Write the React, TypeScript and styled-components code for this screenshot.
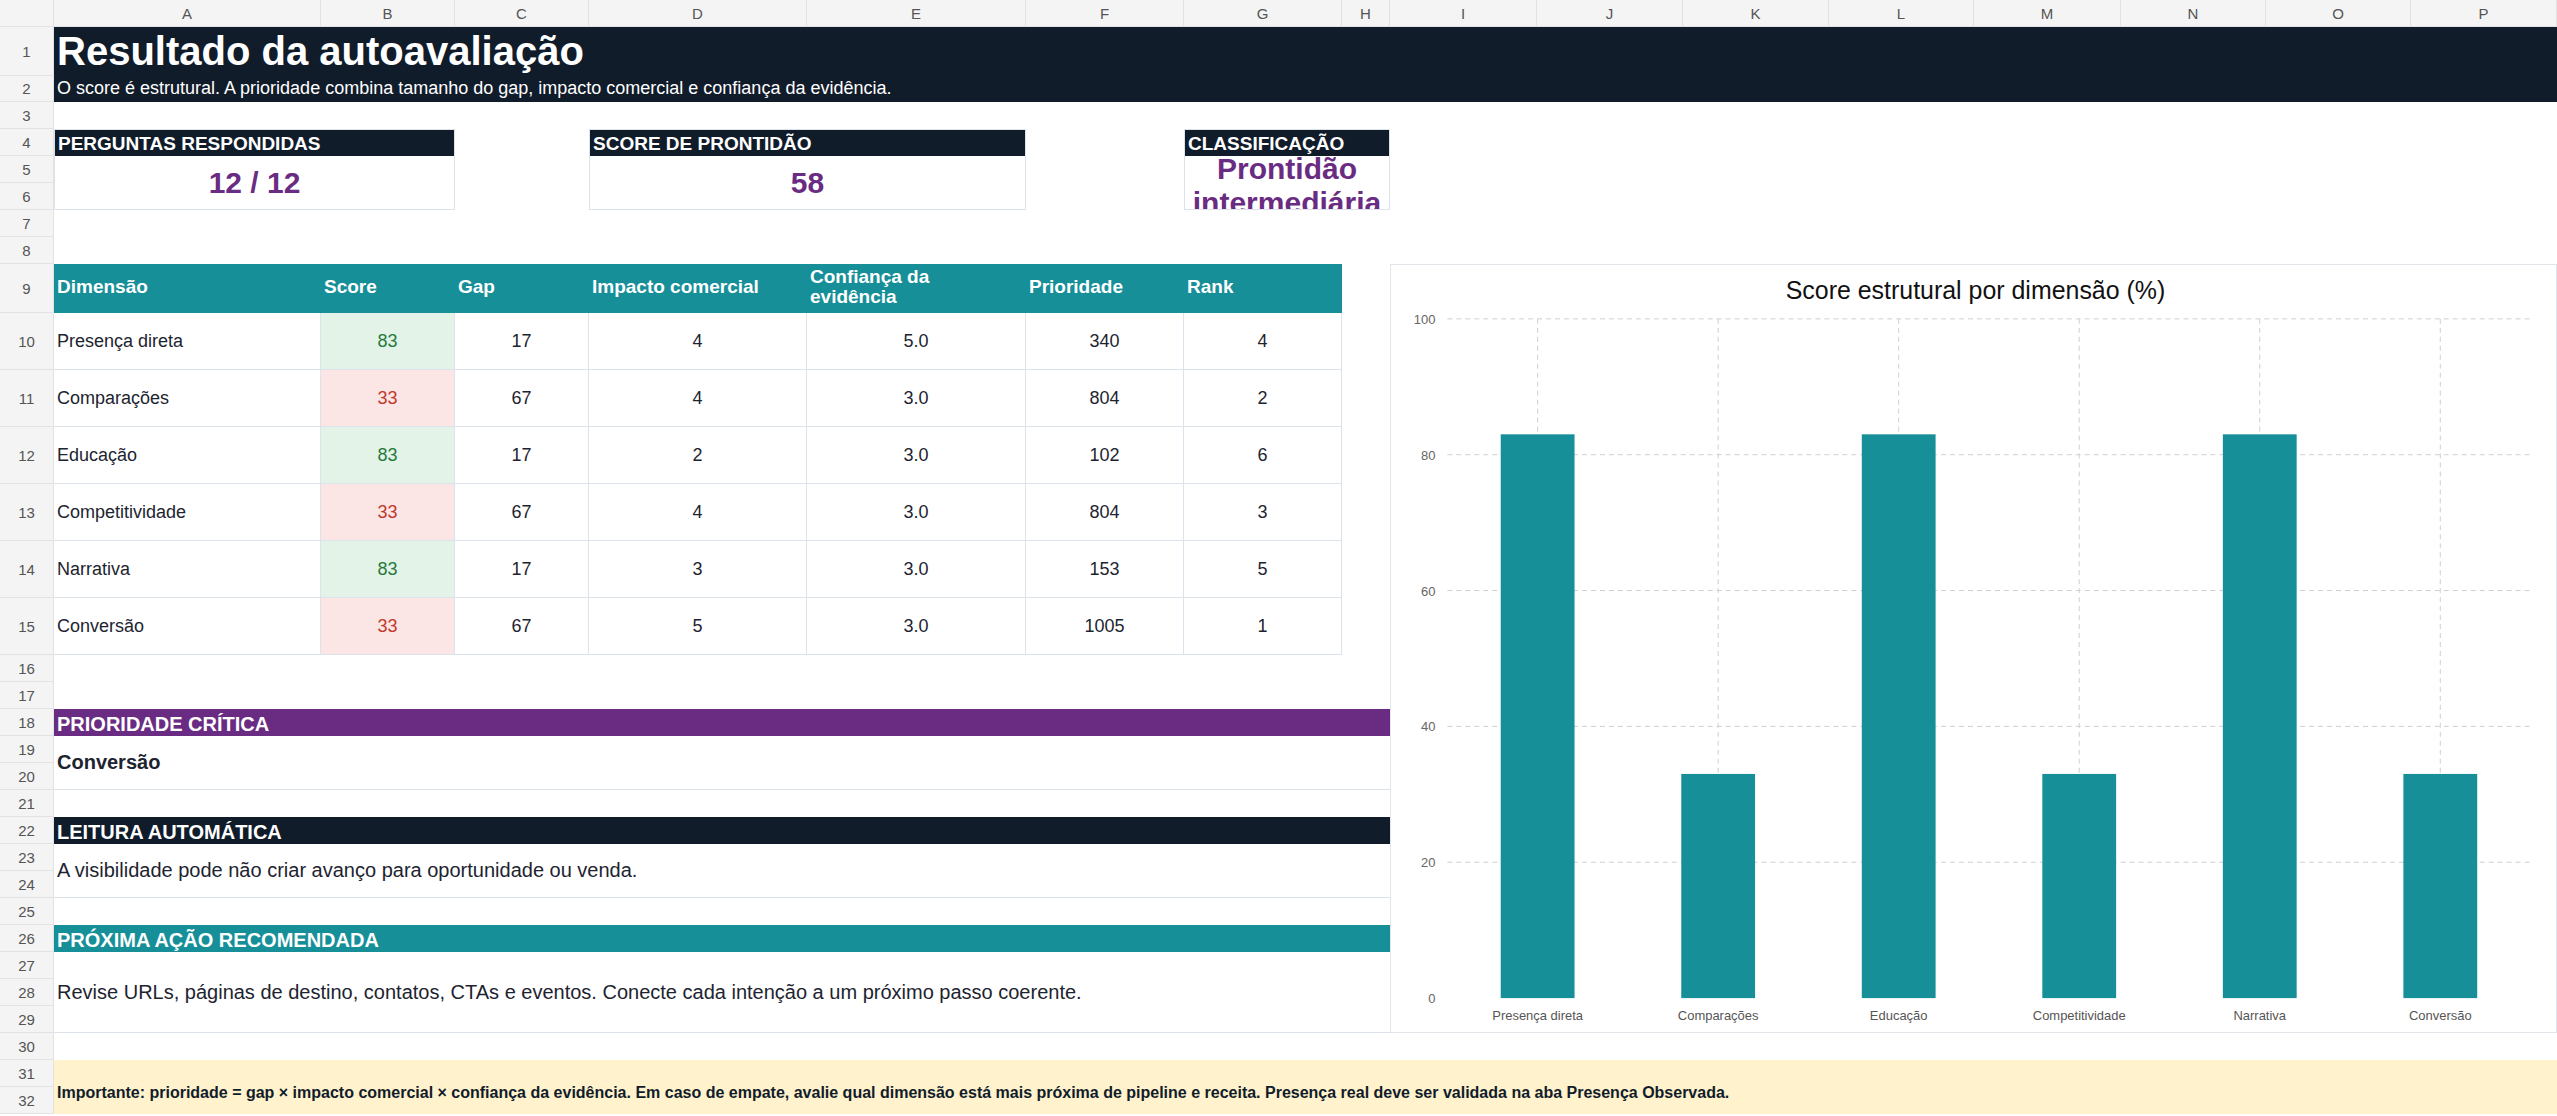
import styled, { createGlobalStyle, css } from "styled-components";

const GlobalStyle = createGlobalStyle`
  html, body { margin: 0; padding: 0; background: #fff; overflow: hidden; }
  body { font-family: "Liberation Sans", Arial, sans-serif; color: #1d2430; }
`;

const COLS = [54, 267, 134, 134, 218, 219, 158, 158, 48, 147, 146, 146, 145, 147, 145, 145, 146];
const ROWS = [27, 49, 26, 27, 27, 27, 27, 27, 27, 49, 57, 57, 57, 57, 57, 57, ...Array(17).fill(27)];
const LETTERS = "ABCDEFGHIJKLMNOP".split("");

type AreaProps = { $c: number; $r: number; $cs?: number; $rs?: number };
const area = css<AreaProps>`
  grid-column: ${(p) => p.$c} / span ${(p) => p.$cs ?? 1};
  grid-row: ${(p) => p.$r} / span ${(p) => p.$rs ?? 1};
`;

const Sheet = styled.div`
  display: grid;
  grid-template-columns: ${COLS.map((c) => c + "px").join(" ")};
  grid-template-rows: ${ROWS.map((r) => r + "px").join(" ")};
  width: 2557px;
  height: 1116px;
`;

const HeadCell = styled.div<AreaProps>`
  ${area}
  background: #f4f4f4;
  border-right: 1px solid #e2e2e2;
  border-bottom: 1px solid #e2e2e2;
  color: #555;
  font-size: 15px;
  display: flex;
  align-items: center;
  justify-content: center;
`;

const Banner = styled.div<AreaProps>`
  ${area}
  background: #111c2b;
  color: #fff;
  padding-left: 3px;
  display: flex;
  flex-direction: column;
`;

const Title = styled.div`
  height: 49px;
  font-size: 40px;
  font-weight: 700;
  line-height: 49px;
`;

const Subtitle = styled.div`
  font-size: 18px;
  line-height: 24px;
`;

const Card = styled.div<AreaProps>`
  ${area}
  display: flex;
  flex-direction: column;
  border: 1px solid #dde3ea;
  overflow: hidden;
`;

const CardHead = styled.div`
  height: 26px;
  background: #111c2b;
  color: #fff;
  font-weight: 700;
  font-size: 19px;
  line-height: 28px;
  padding-left: 3px;
  flex-shrink: 0;
`;

const CardValue = styled.div<{ $small?: boolean }>`
  flex: 1;
  display: flex;
  align-items: ${(p) => (p.$small ? "flex-start" : "center")};
  justify-content: center;
  text-align: center;
  color: #6a2c82;
  font-weight: 700;
  font-size: 30px;
  line-height: ${(p) => (p.$small ? "34px" : "1")};
  margin-top: ${(p) => (p.$small ? "-4px" : "0")};
`;

const Table = styled.div<AreaProps>`
  ${area}
  display: grid;
  grid-template-columns: 267px 134px 134px 218px 219px 158px 158px;
  grid-template-rows: 49px repeat(6, 57px);
`;

const Th = styled.div`
  background: #168f99;
  color: #fff;
  font-weight: 700;
  font-size: 19px;
  line-height: 20px;
  padding: 0 3px 4px;
  display: flex;
  align-items: center;
  & > span { max-width: 175px; }
`;

const Td = styled.div<{ $tone?: "good" | "bad"; $left?: boolean }>`
  border-right: 1px solid #dde3ea;
  border-bottom: 1px solid #dde3ea;
  font-size: 18px;
  display: flex;
  align-items: center;
  justify-content: ${(p) => (p.$left ? "flex-start" : "center")};
  padding-left: ${(p) => (p.$left ? "3px" : "0")};
  background: ${(p) => (p.$tone === "good" ? "#e3f3e8" : p.$tone === "bad" ? "#fce5e5" : "#fff")};
  color: ${(p) => (p.$tone === "good" ? "#257a3c" : p.$tone === "bad" ? "#c0392b" : "#1d2430")};
  &:first-child { border-left: 1px solid #dde3ea; }
`;

const SectionBar = styled.div<AreaProps & { $bg: string }>`
  ${area}
  background: ${(p) => p.$bg};
  color: #fff;
  font-weight: 700;
  font-size: 20px;
  line-height: 30px;
  padding-left: 3px;
`;

const SectionBody = styled.div<AreaProps & { $bold?: boolean }>`
  ${area}
  border-bottom: 1px solid #dde3ea;
  display: flex;
  align-items: center;
  padding-left: 3px;
  font-size: 20px;
  font-weight: ${(p) => (p.$bold ? 700 : 400)};
  color: #1d2430;
`;

const Footer = styled.div<AreaProps>`
  ${area}
  background: #fff2cc;
  display: flex;
  align-items: flex-end;
  padding: 0 0 12px 3px;
  font-size: 16px;
  font-weight: 700;
  color: #111c2b;
`;

const ChartPanel = styled.div<AreaProps>`
  ${area}
  border: 1px solid #e2e5e9;
  background: #fff;
`;

const rows = [
  ["Presença direta", 83, 17, 4, "5.0", 340, 4],
  ["Comparações", 33, 67, 4, "3.0", 804, 2],
  ["Educação", 83, 17, 2, "3.0", 102, 6],
  ["Competitividade", 33, 67, 4, "3.0", 804, 3],
  ["Narrativa", 83, 17, 3, "3.0", 153, 5],
  ["Conversão", 33, 67, 5, "3.0", 1005, 1],
] as const;

function Chart() {
  const W = 1167, H = 771;
  const left = 56, right = 1142, top = 54, bottom = 735;
  const step = (right - left) / 6;
  const y = (v: number) => bottom - ((bottom - top) * v) / 100;
  return (
    <svg width={W - 2} height={H - 2} viewBox={`0 0 ${W} ${H}`}>
      <text x={W / 2 + 2} y={34} textAnchor="middle" fontSize="25" fill="#111" fontFamily="Liberation Sans, Arial, sans-serif">
        Score estrutural por dimensão (%)
      </text>
      {[20, 40, 60, 80, 100].map((v) => (
        <line key={v} x1={left} x2={right} y1={y(v)} y2={y(v)} stroke="#cfcfcf" strokeDasharray="5 4" />
      ))}
      {rows.map((r, i) => (
        <line key={i} x1={left + step * (i + 0.5)} x2={left + step * (i + 0.5)} y1={top} y2={bottom} stroke="#cfcfcf" strokeDasharray="5 4" />
      ))}
      {[0, 20, 40, 60, 80, 100].map((v) => (
        <text key={v} x={44} y={y(v) + 5} textAnchor="end" fontSize="13" fill="#666" fontFamily="Liberation Sans, Arial, sans-serif">
          {v}
        </text>
      ))}
      {rows.map((r, i) => (
        <g key={r[0]}>
          <rect x={left + step * (i + 0.5) - 37} y={y(r[1])} width={74} height={bottom - y(r[1])} fill="#168f99" />
          <text x={left + step * (i + 0.5)} y={757} textAnchor="middle" fontSize="13" fill="#555" fontFamily="Liberation Sans, Arial, sans-serif">
            {r[0]}
          </text>
        </g>
      ))}
    </svg>
  );
}

export default function App() {
  return (
    <>
      <GlobalStyle />
      <Sheet>
        <HeadCell $c={1} $r={1} />
        {LETTERS.map((l, i) => (
          <HeadCell key={l} $c={i + 2} $r={1}>{l}</HeadCell>
        ))}
        {ROWS.slice(1).map((_, i) => (
          <HeadCell key={i} $c={1} $r={i + 2}>{i + 1}</HeadCell>
        ))}

        <Banner $c={2} $r={2} $cs={16} $rs={2}>
          <Title>Resultado da autoavaliação</Title>
          <Subtitle>O score é estrutural. A prioridade combina tamanho do gap, impacto comercial e confiança da evidência.</Subtitle>
        </Banner>

        <Card $c={2} $r={5} $cs={2} $rs={3}>
          <CardHead>PERGUNTAS RESPONDIDAS</CardHead>
          <CardValue>12 / 12</CardValue>
        </Card>
        <Card $c={5} $r={5} $cs={2} $rs={3}>
          <CardHead>SCORE DE PRONTIDÃO</CardHead>
          <CardValue>58</CardValue>
        </Card>
        <Card $c={8} $r={5} $cs={2} $rs={3}>
          <CardHead>CLASSIFICAÇÃO</CardHead>
          <CardValue $small>Prontidão<br />intermediária</CardValue>
        </Card>

        <Table $c={2} $r={10} $cs={7} $rs={7}>
          {["Dimensão", "Score", "Gap", "Impacto comercial", "Confiança da evidência", "Prioridade", "Rank"].map((h) => (
            <Th key={h}><span>{h}</span></Th>
          ))}
          {rows.map((r) =>
            r.map((v, j) => (
              <Td key={r[0] + j} $left={j === 0} $tone={j === 1 ? (r[1] > 50 ? "good" : "bad") : undefined}>
                {v}
              </Td>
            ))
          )}
        </Table>

        <ChartPanel $c={10} $r={10} $cs={8} $rs={21}>
          <Chart />
        </ChartPanel>

        <SectionBar $c={2} $r={19} $cs={8} $bg="#6a2c82">PRIORIDADE CRÍTICA</SectionBar>
        <SectionBody $c={2} $r={20} $cs={8} $rs={2} $bold>Conversão</SectionBody>
        <SectionBar $c={2} $r={23} $cs={8} $bg="#111c2b">LEITURA AUTOMÁTICA</SectionBar>
        <SectionBody $c={2} $r={24} $cs={8} $rs={2}>A visibilidade pode não criar avanço para oportunidade ou venda.</SectionBody>
        <SectionBar $c={2} $r={27} $cs={8} $bg="#168f99">PRÓXIMA AÇÃO RECOMENDADA</SectionBar>
        <SectionBody $c={2} $r={28} $cs={8} $rs={3}>Revise URLs, páginas de destino, contatos, CTAs e eventos. Conecte cada intenção a um próximo passo coerente.</SectionBody>

        <Footer $c={2} $r={32} $cs={16} $rs={2}>
          Importante: prioridade = gap × impacto comercial × confiança da evidência. Em caso de empate, avalie qual dimensão está mais próxima de pipeline e receita. Presença real deve ser validada na aba Presença Observada.
        </Footer>
      </Sheet>
    </>
  );
}
